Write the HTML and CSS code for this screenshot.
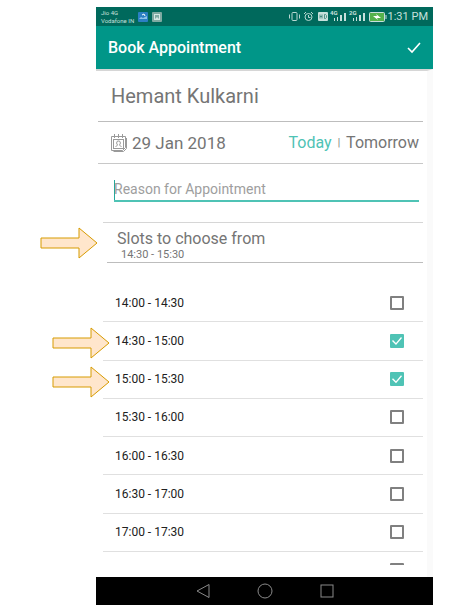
FILE: index.html
```html
<!DOCTYPE html>
<html lang="en">
<head>
<meta charset="utf-8">
<meta name="viewport" content="width=device-width, initial-scale=1">
<title>Book Appointment</title>
<link rel="stylesheet" href="styles.css">
</head>
<body>
<div class="phone">
  <div class="status">
    <div class="carriers"><span>Jio 4G</span><span>Vodafone IN</span></div>
    <svg class="note" width="10" height="10" viewBox="0 0 10 10"><rect width="10" height="10" rx="1" fill="#2b7fc4"/><path d="M1 7l2-2 2 1 4-2v3H1z" fill="#8cc3ea"/><path d="M4 3l2-1 1 2" stroke="#fff" fill="none"/></svg>
    <svg class="note" width="10" height="10" viewBox="0 0 10 10"><rect width="10" height="10" rx="1" fill="#7faaa2"/><rect x="2.5" y="2.5" width="5" height="5" fill="none" stroke="#d5e6e3"/><path d="M2 8l3-3 3 3z" fill="#d5e6e3"/></svg>
    <div class="indicators">
      <svg width="99" height="15" viewBox="0 0 99 15">
        <g fill="none" stroke="#b9d8d2">
          <rect x="3" y="3.5" width="5" height="8" rx="1"/>
          <path d="M.5 5.500v4M10.500 5.500v4"/>
          <circle cx="19.500" cy="8" r="3.500"/>
          <path d="M19.500 6v2.500h2M15 5l2-2M24 5l-2-2"/>
        </g>
        <rect x="29" y="3" width="10" height="9" rx="1" fill="#c7e0dc"/>
        <path d="M31 5.500v4M33 5.500v4M31 7.500h2M35.500 5.500v4h1l1-1v-2l-1-1z" fill="none" stroke="#347f73" stroke-width=".8"/>
        <g fill="#c7e0dc">
          <rect x="45" y="9" width="1" height="3"/><rect x="48" y="8" width="1" height="4"/><rect x="51" y="6" width="2" height="6"/><rect x="55" y="4" width="2" height="8"/>
          <rect x="64" y="9" width="1" height="3"/><rect x="67" y="8" width="1" height="4"/><rect x="70" y="6" width="2" height="6"/><rect x="74" y="4" width="2" height="8"/>
          <text x="41" y="6" class="net">4G</text>
          <text x="60" y="6" class="net">2G</text>
        </g>
        <rect x="80.500" y="3.500" width="15" height="9" rx="1" fill="#55b24c" stroke="#c7e0dc"/>
        <path d="M97 6v4" stroke="#c7e0dc"/>
        <path d="M84 7l4 0-1-2 5 4-4 0 1 2z" fill="#fff"/>
      </svg>
      <time class="clock">1:31 PM</time>
    </div>
  </div>

  <header class="appbar">
    <h1>Book Appointment</h1>
    <button class="done" type="button" aria-label="Save"><svg width="14" height="12" viewBox="0 0 14 12"><path d="M1 6l4 4 8-9" fill="none" stroke="#fff" stroke-width="1.600"/></svg></button>
  </header>

  <main class="content">
    <h2 class="patient">Hemant Kulkarni</h2>

    <div class="date-row">
      <svg width="16" height="18" viewBox="0 0 16 18" fill="none" stroke="#9a9a9a">
        <path d="M.5 2.500h14v11l-3 3H.5zM2.500 17.500h10l3-3V4"/>
        <rect x="2.500" y="5.500" width="10" height="9"/>
        <path d="M3.500 0v4M7.500 0v4M11.500 0v4M4.500 13l2-2-1-2 1-2h2l1 2-1 2 2 2"/>
      </svg>
      <span class="date">29 Jan 2018</span>
      <button class="day active" type="button">Today</button>
      <span class="divider">|</span>
      <button class="day" type="button">Tomorrow</button>
    </div>

    <div class="reason">
      <div class="field"><input type="text" aria-label="Reason for Appointment" placeholder="Reason for Appointment"></div>
    </div>

    <div class="summary">
      <h3>Slots to choose from</h3>
      <p>14:30 - 15:30</p>
      <svg class="arrow" width="58" height="32" viewBox="0 0 58 32"><path d="M1 11h38V1l18 15-18 15V21H1z"/></svg>
    </div>

    <div class="slots">
      <label class="slot"><span>14:00 - 14:30</span><input type="checkbox"></label>
      <label class="slot"><span>14:30 - 15:00</span><input type="checkbox" checked>
        <svg class="arrow" width="58" height="32" viewBox="0 0 58 32"><path d="M1 11h38V1l18 15-18 15V21H1z"/></svg></label>
      <label class="slot"><span>15:00 - 15:30</span><input type="checkbox" checked>
        <svg class="arrow" width="58" height="32" viewBox="0 0 58 32"><path d="M1 11h38V1l18 15-18 15V21H1z"/></svg></label>
      <label class="slot"><span>15:30 - 16:00</span><input type="checkbox"></label>
      <label class="slot"><span>16:00 - 16:30</span><input type="checkbox"></label>
      <label class="slot"><span>16:30 - 17:00</span><input type="checkbox"></label>
      <label class="slot"><span>17:00 - 17:30</span><input type="checkbox"></label>
      <div class="slot partial"><input type="checkbox" aria-label="17:30 - 18:00"></div>
    </div>
  </main>

  <nav class="navbar">
    <button type="button" aria-label="Back"><svg width="16" height="16" viewBox="0 0 16 16"><path d="M14 1.500v13L2 8z"/></svg></button>
    <button type="button" aria-label="Home"><svg width="16" height="16" viewBox="0 0 16 16"><circle cx="8" cy="8" r="7"/></svg></button>
    <button type="button" aria-label="Recent apps"><svg width="16" height="16" viewBox="0 0 16 16"><rect x="2" y="2" width="12" height="12"/></svg></button>
  </nav>
</div>
</body>
</html>
```
FILE: styles.css
```css
* {
  box-sizing: border-box;
}

body {
  display: flex;
  min-height: 100vh;
  margin: 0;
  padding: 7px 37px 7px 96px;
  background: #fff;
  color: #757575;
  font-family: Roboto, "Liberation Sans", sans-serif;
}

h1, h2, h3, p {
  margin: 0;
  font-weight: 400;
}

button {
  padding: 0;
  border: 0;
  background: none;
  color: inherit;
  font: inherit;
}

svg {
  display: block;
  flex: none;
}

.phone {
  display: flex;
  flex: 1;
  flex-direction: column;
  min-width: 0;
}

.status {
  display: flex;
  align-items: center;
  gap: 4px;
  height: 19px;
  padding: 0 5px;
  background: #00695c;
  color: #c7e0dc;
}

.carriers {
  display: flex;
  flex-direction: column;
  font-size: 6px;
  line-height: 8px;
}

.indicators {
  display: flex;
  align-items: center;
  margin-left: auto;
}

.net {
  font-size: 6px;
  font-weight: 700;
}

.clock {
  font-size: 11px;
  line-height: 19px;
  white-space: nowrap;
}

.appbar {
  display: flex;
  align-items: center;
  justify-content: space-between;
  height: 43px;
  padding: 0 12px;
  background: #009688;
  color: #fff;
}

.appbar h1 {
  font-size: 16px;
  font-weight: 500;
}

.content {
  display: flex;
  flex: 1;
  flex-direction: column;
  padding: 0 4px 0 2px;
  border-top: 2px solid #d6d6d6;
  border-right: 6px solid #fafafa;
}

.patient {
  padding-left: 13px;
  border-bottom: 1px solid #bdbdbd;
  font-size: 20px;
  line-height: 50px;
}

.date-row {
  display: flex;
  align-items: center;
  height: 42px;
  padding: 0 4px 0 13px;
  border-bottom: 1px solid #c8c8c8;
  font-size: 16px;
}

.date {
  margin: 0 auto 0 5px;
  font-size: 17px;
}

.active {
  color: #4fc3b5;
}

.divider {
  margin: 0 6px;
  font-size: 10px;
}

.reason {
  height: 59px;
  margin-left: 5px;
  padding: 15px 4px 0 11px;
  border-bottom: 1px solid #d6d6d6;
}

.field {
  position: relative;
  border-bottom: 2px solid #4fc3b5;
}

.field::before {
  position: absolute;
  top: 1px;
  bottom: 0;
  left: 0;
  width: 1px;
  background: #26a69a;
  content: "";
}

.field input {
  display: block;
  width: 100%;
  height: 21px;
  padding: 0;
  border: 0;
  outline: 0;
  background: none;
  color: #757575;
  font: 14px/21px Roboto, "Liberation Sans", sans-serif;
}

.field input::placeholder {
  color: #9e9e9e;
}

.summary {
  position: relative;
  height: 40px;
  margin-left: 9px;
  padding: 6px 0 0 10px;
  border-bottom: 1px solid #bdbdbd;
}

.summary h3 {
  font-size: 16px;
  line-height: 19px;
}

.summary p {
  padding-left: 4px;
  font-size: 11px;
  line-height: 14px;
}

.slots {
  display: grid;
  flex: 1;
  grid-template-rows: repeat(7, minmax(38px, 1fr)) 13px;
  margin-left: 5px;
  padding: 21px 0 12px;
}

.slot {
  position: relative;
  display: flex;
  align-items: center;
  justify-content: space-between;
  padding: 0 19px 0 12px;
  border-bottom: 1px solid #e0e0e0;
  color: #212121;
  font-size: 12px;
}

.partial {
  align-items: flex-start;
  justify-content: flex-end;
  padding-top: 11px;
  border: 0;
  overflow: hidden;
}

.slot input {
  position: relative;
  flex: none;
  width: 14px;
  height: 14px;
  margin: 0;
  border: 2px solid #808080;
  border-radius: 1px;
  appearance: none;
}

.slot input:checked {
  border-color: #4fc3b5;
  background: #4fc3b5;
}

.slot input:checked::after {
  position: absolute;
  inset: -2px;
  background: #fff;
  clip-path: polygon(2px 7px, 3px 6px, 6px 9px, 11px 3px, 12px 4px, 6px 11px);
  content: "";
}

.arrow {
  position: absolute;
  top: 4px;
  right: 100%;
  margin-right: 9px;
  fill: #ffe6cc;
  stroke: #d79b00;
}

.slot .arrow {
  top: 5px;
  margin-right: -7px;
}

.navbar {
  display: flex;
  align-items: center;
  justify-content: center;
  gap: 46px;
  height: 28px;
  background: #000;
}

.navbar svg {
  fill: none;
  stroke: #8a8a8a;
}
```
